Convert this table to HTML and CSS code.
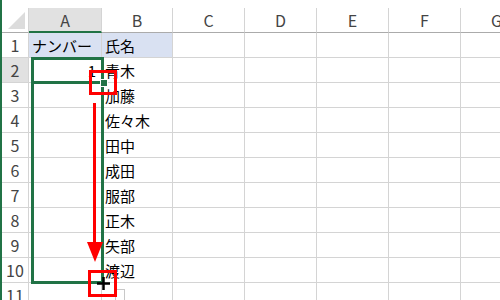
FILE: index.html
```html
<!DOCTYPE html>
<html lang="ja">
<head>
  <meta charset="UTF-8">
  <title>オートフィル</title>
  <link rel="stylesheet" href="styles.css">
</head>
<body>
  <div class="sheet">
    <div class="grid">
      <!-- 列見出し -->
      <div class="corner">
        <svg width="17" height="17" viewBox="0 0 17 17"><polygon points="17,0 17,17 0,17" fill="#dcdcdc"/></svg>
      </div>
      <div class="colhead active">A</div>
      <div class="colhead">B</div>
      <div class="colhead">C</div>
      <div class="colhead">D</div>
      <div class="colhead">E</div>
      <div class="colhead">F</div>
      <div class="colhead">G</div>

      <div class="rowhead">1</div>
      <div class="cell title">ナンバー</div>
      <div class="cell title">氏名</div>
      <div class="cell"></div><div class="cell"></div><div class="cell"></div><div class="cell"></div><div class="cell"></div>

      <div class="rowhead active">2</div>
      <div class="cell num">1</div>
      <div class="cell">青木</div>
      <div class="cell"></div><div class="cell"></div><div class="cell"></div><div class="cell"></div><div class="cell"></div>

      <div class="rowhead">3</div>
      <div class="cell"></div>
      <div class="cell">加藤</div>
      <div class="cell"></div><div class="cell"></div><div class="cell"></div><div class="cell"></div><div class="cell"></div>

      <div class="rowhead">4</div>
      <div class="cell"></div>
      <div class="cell">佐々木</div>
      <div class="cell"></div><div class="cell"></div><div class="cell"></div><div class="cell"></div><div class="cell"></div>

      <div class="rowhead">5</div>
      <div class="cell"></div>
      <div class="cell">田中</div>
      <div class="cell"></div><div class="cell"></div><div class="cell"></div><div class="cell"></div><div class="cell"></div>

      <div class="rowhead">6</div>
      <div class="cell"></div>
      <div class="cell">成田</div>
      <div class="cell"></div><div class="cell"></div><div class="cell"></div><div class="cell"></div><div class="cell"></div>

      <div class="rowhead">7</div>
      <div class="cell"></div>
      <div class="cell">服部</div>
      <div class="cell"></div><div class="cell"></div><div class="cell"></div><div class="cell"></div><div class="cell"></div>

      <div class="rowhead">8</div>
      <div class="cell"></div>
      <div class="cell">正木</div>
      <div class="cell"></div><div class="cell"></div><div class="cell"></div><div class="cell"></div><div class="cell"></div>

      <div class="rowhead">9</div>
      <div class="cell"></div>
      <div class="cell">矢部</div>
      <div class="cell"></div><div class="cell"></div><div class="cell"></div><div class="cell"></div><div class="cell"></div>

      <div class="rowhead">10</div>
      <div class="cell"></div>
      <div class="cell">渡辺</div>
      <div class="cell"></div><div class="cell"></div><div class="cell"></div><div class="cell"></div><div class="cell"></div>

      <div class="rowhead">11</div>
      <div class="cell"></div>
      <div class="cell"></div>
      <div class="cell"></div><div class="cell"></div><div class="cell"></div><div class="cell"></div><div class="cell"></div>
    </div>

    <!-- 選択範囲とフィルハンドル -->
    <div class="range"></div>
    <div class="active-line"></div>
    <div class="handle"></div>

    <!-- 説明用の赤枠と矢印 -->
    <div class="mark mark-top"></div>
    <div class="arrow-line"></div>
    <svg class="arrow-head" width="16" height="20" viewBox="0 0 16 20"><polygon points="0,0 16,0 8,20" fill="#ff0000"/></svg>
    <div class="fill-options"></div>
    <div class="mark mark-bottom"></div>
    <svg class="cross" width="13" height="13" viewBox="0 0 13 13">
      <rect x="0" y="5.25" width="13" height="2.5" fill="#000"/>
      <rect x="5.25" y="0" width="2.5" height="13" fill="#000"/>
    </svg>
  </div>
</body>
</html>
```

FILE: styles.css
```css
body {
  margin: 0;
  background: #fff;
  overflow: hidden;
  font-family: "Noto Sans CJK JP", "Noto Sans", sans-serif;
}

.sheet {
  position: relative;
  height: 300px;
  border-left: 2px solid #217346;
  padding-top: 8px;
  overflow: hidden;
}

.grid {
  display: grid;
  grid-template-columns: 27px 73px 71px 72px 72px 72px 72px 72px;
  grid-auto-rows: 25px;
}

.corner {
  display: flex;
  align-items: flex-end;
  justify-content: flex-end;
  padding: 0 3px 3px 0;
  border-right: 1px solid #d4d4d4;
  border-bottom: 1px solid #ababab;
}

.colhead {
  display: flex;
  align-items: center;
  justify-content: center;
  font-size: 16px;
  color: #444;
  border-right: 1px solid #d4d4d4;
  border-bottom: 1px solid #ababab;
}

.colhead.active {
  background: #e1e1e1;
  border-bottom: 2px solid #217346;
}

.rowhead {
  display: flex;
  align-items: center;
  justify-content: center;
  font-size: 16px;
  color: #444;
  border-right: 1px solid #d4d4d4;
  border-bottom: 1px solid #d4d4d4;
}

.rowhead.active {
  background: #e1e1e1;
}

.cell {
  display: flex;
  align-items: center;
  padding-left: 3px;
  font-size: 15px;
  color: #000;
  white-space: nowrap;
  border-right: 1px solid #d4d4d4;
  border-bottom: 1px solid #d4d4d4;
}

.cell.title {
  background: #d9e1f2;
}

.cell.num {
  justify-content: flex-end;
  padding-right: 5px;
}

.range {
  position: absolute;
  left: 29px;
  top: 57px;
  width: 73px;
  height: 227px;
  border: 3px solid #217346;
  box-sizing: border-box;
}

.active-line {
  position: absolute;
  left: 29px;
  top: 81px;
  width: 72px;
  height: 3px;
  background: #217346;
}

.handle {
  position: absolute;
  left: 98px;
  top: 79px;
  width: 6px;
  height: 6px;
  background: #217346;
  border: 1px solid #fff;
}

.mark {
  position: absolute;
  border: 3px solid #ff0000;
  box-sizing: border-box;
}

.mark-top {
  left: 87px;
  top: 70px;
  width: 28px;
  height: 25px;
}

.mark-bottom {
  left: 86px;
  top: 270px;
  width: 29px;
  height: 27px;
}

.arrow-line {
  position: absolute;
  left: 91px;
  top: 103px;
  width: 3px;
  height: 142px;
  background: #ff0000;
}

.arrow-head {
  position: absolute;
  left: 85px;
  top: 242px;
}

.cross {
  position: absolute;
  left: 95px;
  top: 277px;
}

.fill-options {
  position: absolute;
  left: 113px;
  top: 289px;
  width: 8px;
  height: 14px;
  background: #fff;
  border: 1px solid #c8c8c8;
}
```
